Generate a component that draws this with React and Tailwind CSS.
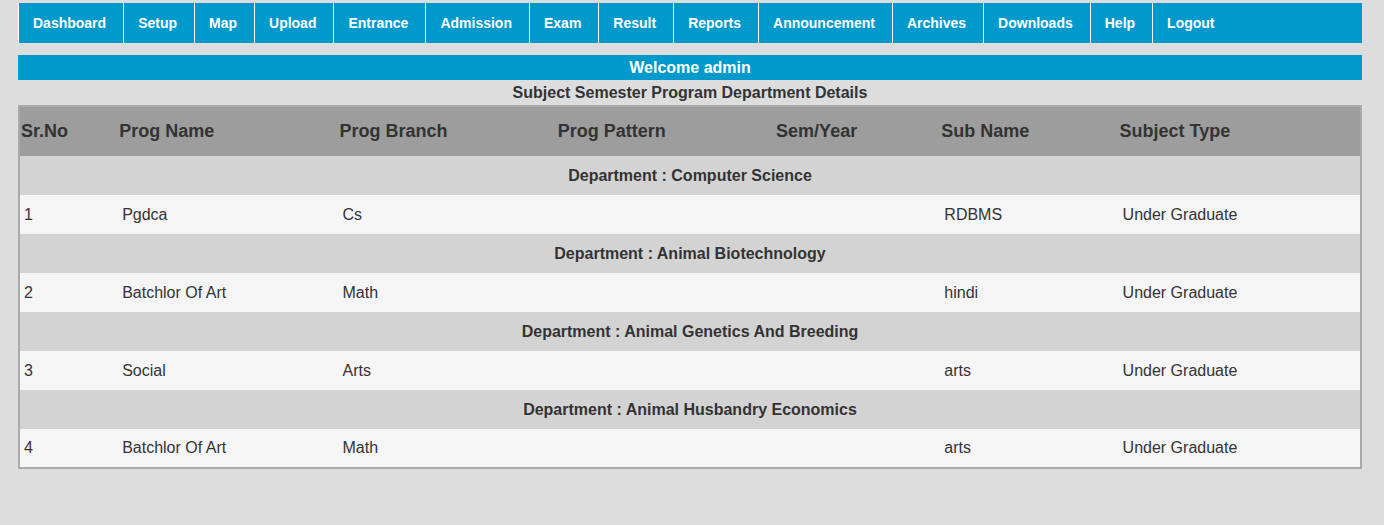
const NAV = ['Dashboard', 'Setup', 'Map', 'Upload', 'Entrance', 'Admission', 'Exam', 'Result', 'Reports', 'Announcement', 'Archives', 'Downloads', 'Help', 'Logout']

const COLS = [
  { label: 'Sr.No', w: 'w-[99px]' },
  { label: 'Prog Name', w: 'w-[220px]' },
  { label: 'Prog Branch', w: 'w-[218px]' },
  { label: 'Prog Pattern', w: 'w-[218px]' },
  { label: 'Sem/Year', w: 'w-[165px]' },
  { label: 'Sub Name', w: 'w-[178px]' },
  { label: 'Subject Type', w: 'w-[242px]' },
]

const GROUPS = [
  { dept: 'Computer Science', row: ['1', 'Pgdca', 'Cs', '', '', 'RDBMS', 'Under Graduate'] },
  { dept: 'Animal Biotechnology', row: ['2', 'Batchlor Of Art', 'Math', '', '', 'hindi', 'Under Graduate'] },
  { dept: 'Animal Genetics And Breeding', row: ['3', 'Social', 'Arts', '', '', 'arts', 'Under Graduate'] },
  { dept: 'Animal Husbandry Economics', row: ['4', 'Batchlor Of Art', 'Math', '', '', 'arts', 'Under Graduate'] },
]

export default function App() {
  return (
    <div className="min-h-screen bg-[#dddddd] font-['Liberation_Sans',Arial,sans-serif] pt-[3px] pl-[18px] pr-[22px]">
      {/* top menu */}
      <nav className="flex h-[40px] bg-[#0099cc]">
        {NAV.map(item => (
          <a
            key={item}
            className="flex items-center border-l border-white pl-[14px] pr-[17px] text-[14px] font-bold text-white"
          >
            {item}
          </a>
        ))}
      </nav>

      <div className="mt-[12px] flex h-[25px] items-center justify-center bg-[#0099cc] text-[16px] font-bold text-white">
        Welcome admin
      </div>
      <div className="flex h-[25px] items-center justify-center text-[16px] font-bold text-[#333333]">
        Subject Semester Program Department Details
      </div>

      <table className="w-full table-fixed border-collapse border-2 border-[#aaaaaa] text-[#333333]">
        <thead>
          <tr className="h-[50px] bg-[#9d9d9d]">
            {COLS.map(c => (
              <th key={c.label} className={`${c.w} px-[1px] text-left text-[18px] font-bold`}>
                {c.label}
              </th>
            ))}
          </tr>
        </thead>
        <tbody>
          {GROUPS.map(g => (
            <>
              <tr key={g.dept} className="h-[39px] bg-[#d3d3d3]">
                <td colSpan={7} className="text-center text-[16px] font-bold">
                  Department : {g.dept}
                </td>
              </tr>
              <tr key={g.dept + '-r'} className="h-[39px] bg-[#f5f5f5]">
                {g.row.map((v, i) => (
                  <td key={i} className="px-[4px] text-[16px]">{v}</td>
                ))}
              </tr>
            </>
          ))}
        </tbody>
      </table>
    </div>
  )
}
